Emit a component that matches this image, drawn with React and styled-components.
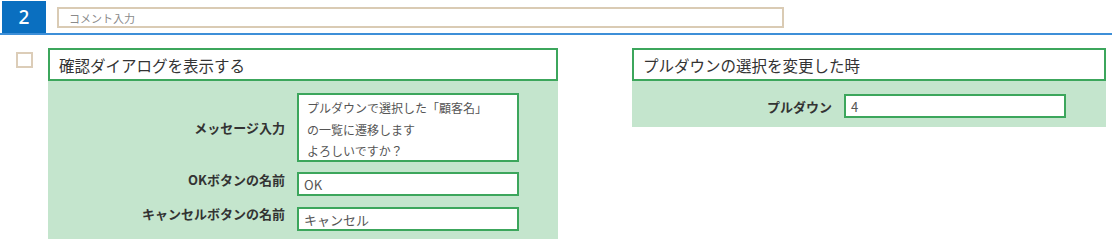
import React from "react";
import styled, { createGlobalStyle } from "styled-components";

const GlobalStyle = createGlobalStyle`
  body {
    margin: 0;
    background: #fff;
    font-family: "Noto Sans CJK JP", "Noto Sans", sans-serif;
    color: #333;
  }
`;

const App = () => {
  return (
    <Page>
      <GlobalStyle />
      <Header>
        <StepNo>2</StepNo>
        <Comment placeholder="コメント入力" />
      </Header>
      <Content>
        <Check />
        <Panel $width={510}>
          <PanelTitle>確認ダイアログを表示する</PanelTitle>
          <PanelBody $label={237} $pad="12px 0 8px">
            <Label>メッセージ入力</Label>
            <MessageBox>
              プルダウンで選択した「顧客名」
              <br />
              の一覧に遷移します
              <br />
              よろしいですか？
            </MessageBox>
            <Label>OKボタンの名前</Label>
            <Field $gap={10}>OK</Field>
            <Label>キャンセルボタンの名前</Label>
            <Field $gap={11}>キャンセル</Field>
          </PanelBody>
        </Panel>
        <Panel $width={474} $left={74}>
          <PanelTitle>プルダウンの選択を変更した時</PanelTitle>
          <PanelBody $label={200} $pad="13px 0 9px">
            <Label>プルダウン</Label>
            <Field>4</Field>
          </PanelBody>
        </Panel>
      </Content>
    </Page>
  );
};

export default App;

const Page = styled.div`
  width: 1112px;
  height: 242px;
  overflow: hidden;
`;

const Header = styled.div`
  display: flex;
  align-items: flex-start;
  height: 32px;
  padding: 1px 0 0 2px;
  border-bottom: 2px solid #3d8fd8;
`;

const StepNo = styled.div`
  width: 44px;
  height: 32px;
  background: #0a6fc0;
  color: #fff;
  font-family: "Noto Sans", sans-serif;
  font-size: 19px;
  font-weight: 500;
  display: flex;
  align-items: center;
  justify-content: center;
`;

const Comment = styled.input`
  box-sizing: border-box;
  margin: 6px 0 0 11px;
  width: 727px;
  height: 21px;
  border: 2px solid #dacbb4;
  padding: 0 0 0 10px;
  font-family: "Noto Sans CJK JP", sans-serif;
  font-size: 11px;
  outline: none;
  &::placeholder {
    color: #8a8a8a;
  }
`;

const Content = styled.div`
  display: flex;
  align-items: flex-start;
  padding: 13px 0 0 16px;
`;

const Check = styled.div`
  box-sizing: border-box;
  width: 17px;
  height: 16px;
  margin-top: 4px;
  border: 2px solid #dccdb8;
  background: #fff;
`;

const Panel = styled.div`
  width: ${(p) => p.$width}px;
  margin-left: ${(p) => p.$left || 15}px;
`;

const PanelTitle = styled.div`
  box-sizing: border-box;
  height: 33px;
  border: 2px solid #3ca65c;
  background: #fff;
  padding-left: 9px;
  display: flex;
  align-items: center;
  font-size: 15.5px;
  color: #333;
`;

const PanelBody = styled.div`
  background: #c4e5cd;
  padding: ${(p) => p.$pad};
  display: grid;
  grid-template-columns: ${(p) => p.$label}px 222px;
  column-gap: 12px;
  align-items: center;
`;

const Label = styled.div`
  text-align: right;
  font-size: 13px;
  font-weight: 700;
  color: #333;
`;

const MessageBox = styled.div`
  box-sizing: border-box;
  height: 69px;
  border: 2px solid #3ca65c;
  background: #fff;
  padding: 2px 0 0 8px;
  font-size: 12px;
  line-height: 21.5px;
  color: #555;
  overflow: hidden;
`;

const Field = styled.div`
  box-sizing: border-box;
  height: 24px;
  margin-top: ${(p) => p.$gap || 0}px;
  border: 2px solid #3ca65c;
  background: #fff;
  padding-left: 5px;
  display: flex;
  align-items: center;
  font-size: 13px;
  color: #555;
`;
